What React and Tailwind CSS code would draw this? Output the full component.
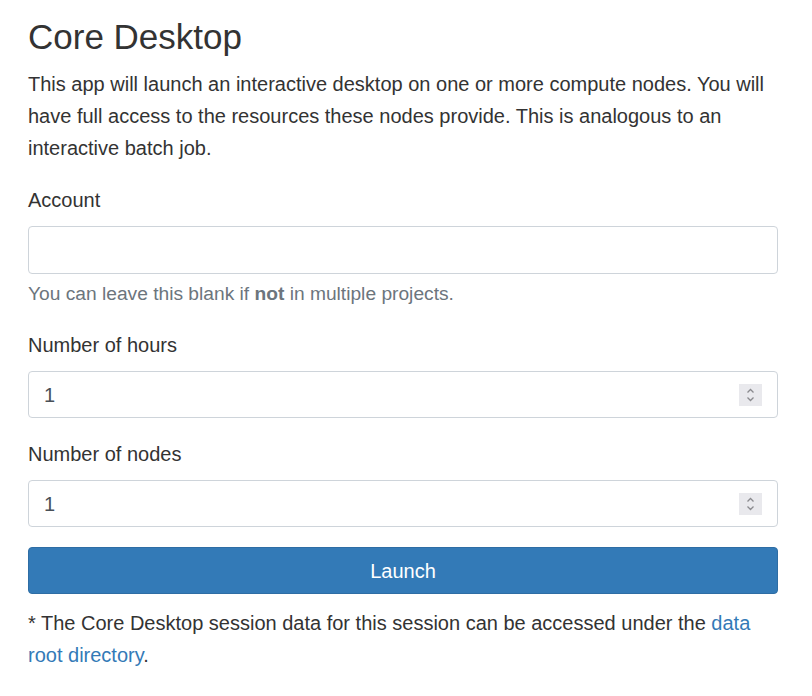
import React from 'react';

const Spinner = () => (
  <div className="flex h-[22px] w-[23px] shrink-0 flex-col items-center justify-center bg-[#e9e9ed]">
    <svg width="11" height="16" viewBox="0 0 11 16" fill="none" stroke="#8a8a8e" strokeWidth="1.3">
      <path d="M2.5 5.5 L5.5 2.5 L8.5 5.5" />
      <path d="M2.5 10.5 L5.5 13.5 L8.5 10.5" />
    </svg>
  </div>
);

const NumberField = ({ value }) => (
  <div className="flex h-[47px] w-full items-center rounded-[4px] border border-[#ced4da] bg-white pl-[15px] pr-[15px]">
    <input
      type="text"
      defaultValue={value}
      className="w-full bg-transparent text-[20px] text-[#495057] outline-none"
    />
    <Spinner />
  </div>
);

export default function App() {
  return (
    <div className="min-h-screen bg-white pl-[28px] pr-[34px] pt-[15px] font-['Liberation_Sans',Arial,sans-serif] text-[20px] leading-[32px] text-[#333]">
      <h1 className="mb-[10px] text-[35px] leading-[43px] font-normal">Core Desktop</h1>
      <p className="mb-[20px]">
        This app will launch an interactive desktop on one or more compute nodes. You will
        have full access to the resources these nodes provide. This is analogous to an
        interactive batch job.
      </p>

      <div className="mb-[19px]">
        <label className="mb-[10px] block">Account</label>
        <input
          type="text"
          className="block h-[48px] w-full rounded-[4px] border border-[#ced4da] bg-white px-[15px] text-[20px] outline-none"
        />
        <small className="mt-[4px] block text-[19.2px] text-[#6c757d]">
          You can leave this blank if <strong>not</strong> in multiple projects.
        </small>
      </div>

      <div className="mb-[20px]">
        <label className="mb-[10px] block">Number of hours</label>
        <NumberField value="1" />
      </div>

      <div className="mb-[20px]">
        <label className="mb-[10px] block">Number of nodes</label>
        <NumberField value="1" />
      </div>

      <button className="block h-[47px] w-full rounded-[4px] border border-[#2e6da4] bg-[#337ab7] text-[20px] text-white">
        Launch
      </button>

      <p className="mt-[13px]">
        * The Core Desktop session data for this session can be accessed under the{' '}
        <a href="#" className="text-[#337ab7]">data root directory</a>.
      </p>
    </div>
  );
}
